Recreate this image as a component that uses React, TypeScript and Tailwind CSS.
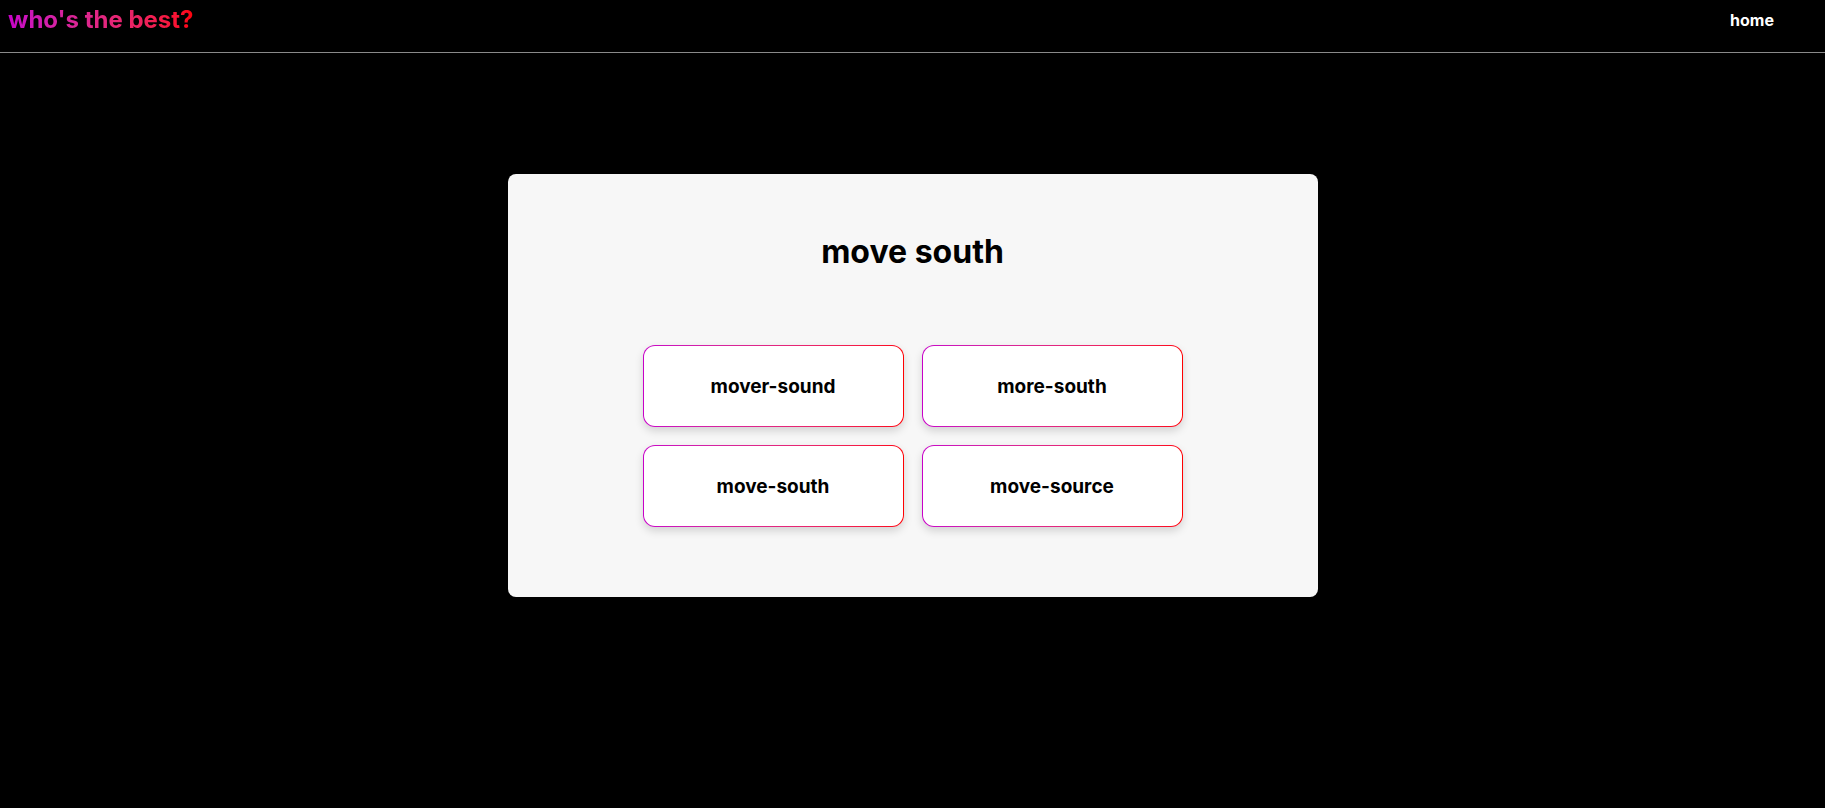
import React from 'react';

const options = ['mover-sound', 'more-south', 'move-south', 'move-source'];

function OptionButton({ label }: { label: string }) {
  return (
    <div className="rounded-xl bg-linear-to-r from-[#c800c8] to-[#ff0000] p-px shadow-[0_4px_8px_rgba(0,0,0,0.15)]">
      <button
        type="button"
        className="flex h-[80px] w-full items-center justify-center rounded-[11px] bg-white pt-px text-[19px] leading-7 font-bold text-black"
      >
        {label}
      </button>
    </div>
  );
}

export default function App() {
  return (
    <div className="min-h-screen bg-black font-['Inter','Liberation_Sans',sans-serif]">
      <header className="flex h-[53px] items-start justify-between border-b border-[#8a8a8a] pl-2 pr-[51px]">
        <h1 className="bg-linear-to-r from-[#c800c8] to-[#ff0000] bg-clip-text pt-[3px] text-[24px] leading-[33px] font-bold text-transparent">
          who's the best?
        </h1>
        <nav className="pt-[8px]">
          <a href="#" className="text-[16px] leading-6 font-bold text-white">
            home
          </a>
        </nav>
      </header>

      <main className="flex justify-center pt-[121px]">
        <div className="flex h-[423px] w-[810px] flex-col items-center rounded-lg bg-[#f7f7f7] pt-[60px]">
          <h2 className="text-[32px] leading-9 font-bold text-black">move south</h2>
          <div className="mt-[75px] grid w-[540px] grid-cols-2 gap-[18px]">
            {options.map((o) => (
              <OptionButton key={o} label={o} />
            ))}
          </div>
        </div>
      </main>
    </div>
  );
}
